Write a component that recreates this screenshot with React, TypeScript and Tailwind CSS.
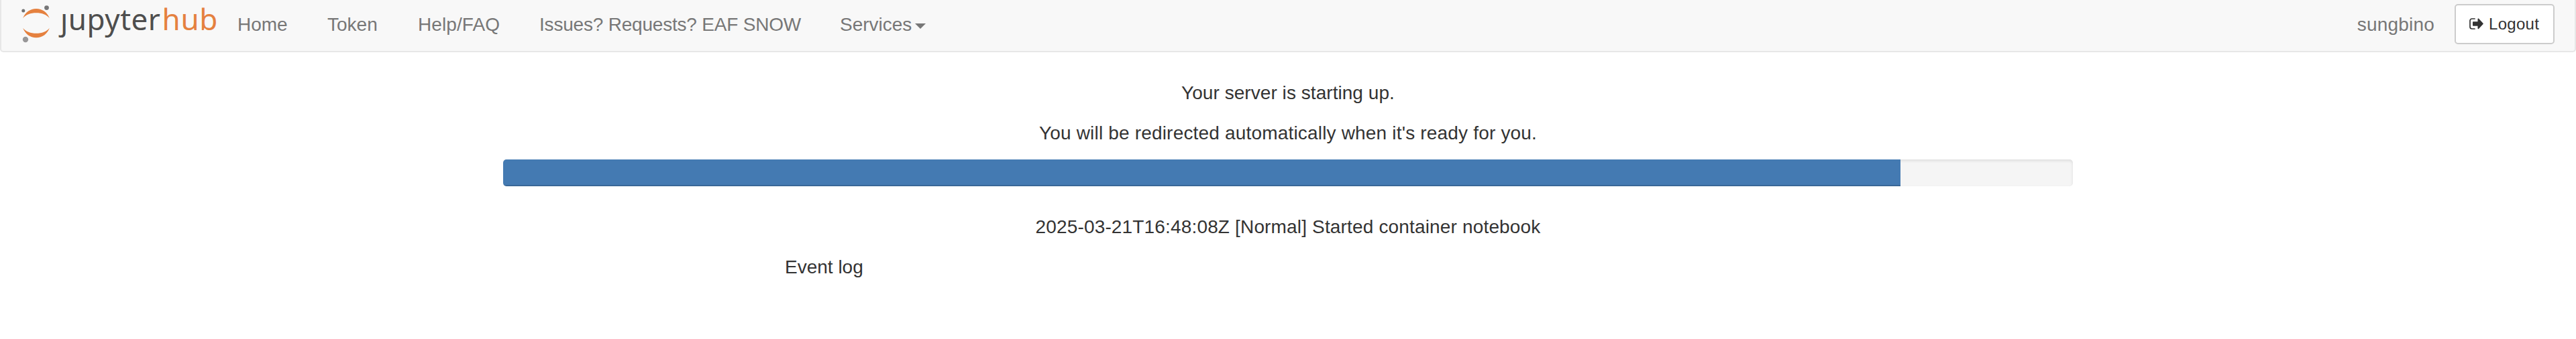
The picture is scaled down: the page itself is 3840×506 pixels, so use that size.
import React from "react";

function Logo() {
  return (
    <a className="flex h-[76px] w-[320px] shrink-0" aria-label="jupyterhub">
      <svg className="ml-[28px] h-[76px] w-[50px] shrink-0" viewBox="30 0 50 76">
        <path d="M34.2 27.3C37.5 18.3 45 13 54 13s16.500 5.300 19.800 14.300C69.500 21.800 62.500 19.300 54 19.300S38.500 21.800 34.200 27.300Z" fill="#e5813f" />
        <path d="M34.200 41.700C38.500 47.200 45.500 49.700 54 49.700s15.500-2.500 19.800-8C70.500 50.700 63 56.200 54 56.200s-16.500-5.500-19.800-14.500Z" fill="#e5813f" />
        <circle cx="69.500" cy="11.600" r="3.400" fill="#767677" />
        <circle cx="34.800" cy="15.900" r="2.500" fill="#717171" />
        <circle cx="38" cy="59" r="4.200" fill="#989798" />
      </svg>
      <span className="ml-[10px] mt-[-2px] whitespace-nowrap font-['Noto_Sans','Open_Sans',sans-serif] text-[44px] leading-[61px] text-[#4e4e4e]">
        <span className="tracking-[0.5px]">ȷupyter</span>
        <span className="ml-[2px] tracking-[0.7px] text-[#e5813f]">hub</span>
      </span>
    </a>
  );
}

export default function App() {
  return (
    <div className="h-[506px] w-full overflow-hidden bg-white font-['Liberation_Sans',Arial,sans-serif] text-[28px] leading-[40px] text-[#333333]">
      <nav className="flex h-[78px] rounded-b-[5px] border-2 border-t-0 border-[#e7e7e7] bg-[#f8f8f8]">
        <Logo />
        <div className="flex flex-1 whitespace-nowrap pt-[17px] text-[#777777]">
          <a className="ml-[32px] w-[134px] shrink-0">Home</a>
          <a className="w-[135px] shrink-0">Token</a>
          <a className="w-[181px] shrink-0 tracking-[0.1px]">Help/FAQ</a>
          <a className="w-[448px] shrink-0 tracking-[-0.2px]">Issues? Requests? EAF SNOW</a>
          <a className="flex shrink-0">
            <span className="w-[112px]">Services</span>
            <svg className="mt-[18px] h-[8px] w-[16px]" viewBox="0 0 16 8">
              <path d="M0 0h16L8 8z" fill="#777777" />
            </svg>
          </a>
        </div>
        <div className="flex">
          <span className="mr-[30px] pt-[17px] tracking-[0.2px] text-[#777777]">sungbino</span>
          <button className="mr-[30px] mt-[6px] flex h-[60px] w-[149px] rounded-[5px] border-2 border-[#cccccc] bg-white pl-[20px] text-[24px] leading-[36px]">
            <svg className="mt-[19px] h-[17px] w-[21px] shrink-0" viewBox="0 0 21 17">
              <path d="M8 1H4a3 3 0 0 0-3 3v9a3 3 0 0 0 3 3h4" fill="none" stroke="#333333" strokeWidth="1.700" strokeLinecap="round" />
              <path d="M5.800 5.200h6.700V1.500c0-1 .9-1.300 1.500-.7l6.500 7c.4.400.4.800 0 1.200l-6.500 7c-.6.600-1.500.3-1.500-.7v-3.500H5.800c-.5 0-.8-.3-.8-.8V6c0-.5.3-.8.8-.8Z" fill="#333333" />
            </svg>
            <span className="ml-[8px] mt-[10px] tracking-[0.3px]">Logout</span>
          </button>
        </div>
      </nav>
      <main className="mx-auto flex w-[2340px] flex-col pt-[41px]">
        <p className="mb-[20px] text-center tracking-[0.05px]">Your server is starting up.</p>
        <p className="mb-[19px] text-center tracking-[0.18px]">You will be redirected automatically when it's ready for you.</p>
        <div className="mb-[41px] h-[40px] overflow-hidden rounded-[5px] bg-[#f5f5f5] shadow-[inset_0_2px_4px_rgba(0,0,0,0.1)]">
          <div className="h-full w-[2083px] bg-[#447ab2] shadow-[inset_0_-2px_0_rgba(0,0,0,0.15)]" />
        </div>
        <p className="mb-[20px] text-center tracking-[0.16px]">2025-03-21T16:48:08Z [Normal] Started container notebook</p>
        <div className="pl-[420px]">Event log</div>
      </main>
    </div>
  );
}
